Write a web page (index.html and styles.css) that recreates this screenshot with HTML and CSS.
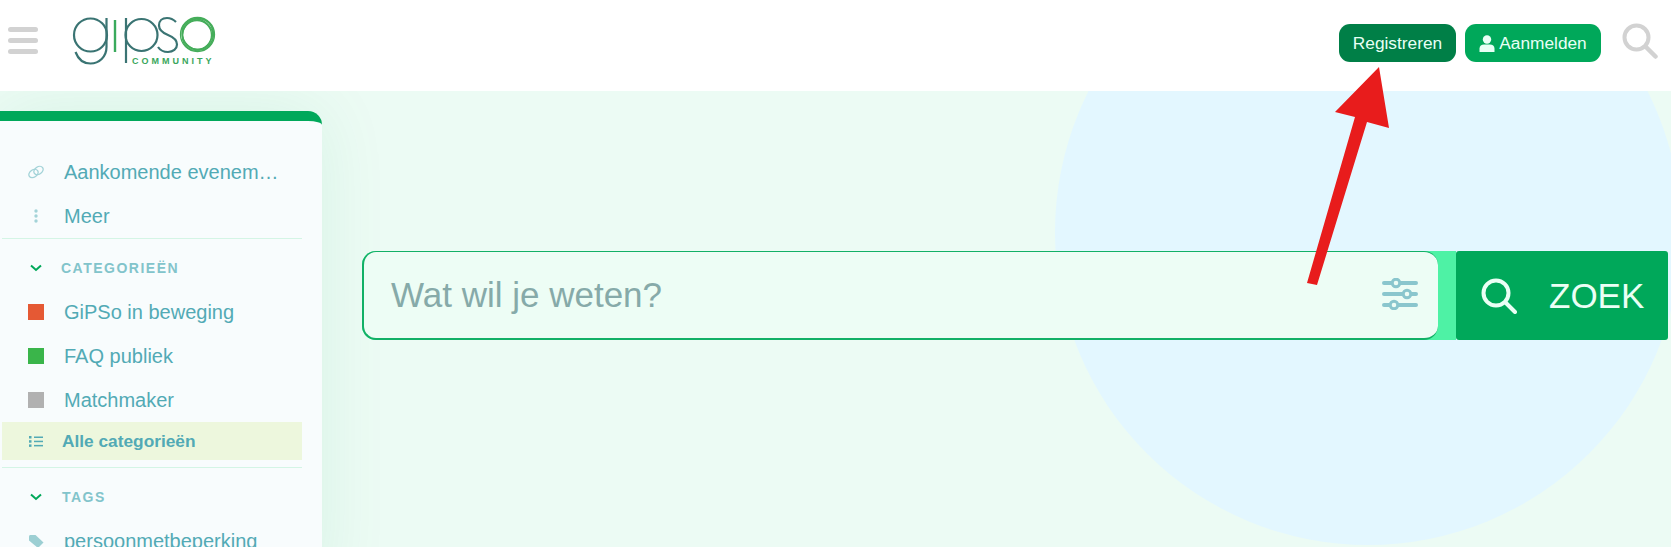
FILE: index.html
```html
<!DOCTYPE html>
<html lang="nl">
<head>
<meta charset="utf-8">
<title>GiPSo Community</title>
<link rel="stylesheet" href="styles.css">
</head>
<body>
<header class="topbar">
  <button class="burger" aria-label="Menu"><span></span><span></span><span></span></button>
  <svg class="logo" width="150" height="70" viewBox="68 5 150 70" aria-label="GiPSo Community">
    <g fill="none" stroke="#3a7473" stroke-width="2.200">
      <circle cx="90.500" cy="35" r="16.500"/>
      <path d="M106.500 18V47C106.500 57 99 63.500 90.500 63.500C84 63.500 78.500 60 75.500 52"/>
      <path d="M126 18V63"/>
      <circle cx="141.500" cy="35" r="16"/>
      <path d="M176 22C173 19 170 18 167 18C162 18 159 21 159 25.500C159 30 163 33 168 35C173 37 177 40 177 44.500C177 49 173 52 168 52C164 52 160 50 158 47"/>
    </g>
    <path d="M115 20V52" stroke="#3aaa5c" stroke-width="2.400" fill="none"/>
    <g fill="none" stroke="#45ad5a" stroke-width="1.300">
      <circle cx="197.500" cy="34.500" r="17"/>
      <circle cx="197" cy="35" r="14.500"/>
      <circle cx="198" cy="34" r="15.500"/>
      <ellipse cx="197.500" cy="34.500" rx="14.500" ry="16.500" transform="rotate(35 197.500 34.500)"/>
      <ellipse cx="197.500" cy="34.500" rx="14.500" ry="16.500" transform="rotate(-45 197.500 34.500)"/>
    </g>
    <text class="logo-sub" x="132" y="63.500">COMMUNITY</text>
  </svg>
  <div class="actions">
    <a class="btn btn-dark">Registreren</a>
    <a class="btn btn-green">
      <svg width="16" height="17" viewBox="0 0 16 17"><circle cx="8" cy="4.500" r="4.200" fill="#e8fff5"/><path d="M0.500 17V13.500C0.500 11 2.500 9.500 5 9.500H11C13.500 9.500 15.500 11 15.500 13.500V17Z" fill="#e8fff5"/></svg>
      Aanmelden
    </a>
    <svg class="head-search" width="36" height="36" viewBox="0 0 36 36" fill="none" stroke="#d2d2d2" stroke-linecap="round"><circle cx="14.500" cy="14.500" r="12" stroke-width="4"/><path d="M24 24L33.500 33.500" stroke-width="4.500"/></svg>
  </div>
</header>

<main class="stage">
  <div class="circle"></div>
  <aside class="sidebar">
    <ul class="nav">
      <li class="row"><span class="ico"><svg width="16" height="14" viewBox="0 0 16 14" fill="none" stroke="#a3d3d8" stroke-width="1.400"><ellipse cx="5.500" cy="8.500" rx="5" ry="3.600" transform="rotate(-35 5.500 8.500)"/><ellipse cx="10.500" cy="5.500" rx="5" ry="3.600" transform="rotate(-35 10.500 5.500)"/></svg></span><span class="label">Aankomende evenem…</span></li>
      <li class="row"><span class="ico"><svg width="4" height="14" viewBox="0 0 4 14" fill="#a3d3d8"><circle cx="2" cy="2" r="1.700"/><circle cx="2" cy="7" r="1.700"/><circle cx="2" cy="12" r="1.700"/></svg></span><span class="label">Meer</span></li>
    </ul>
    <div class="section">
      <div class="sec-head"><span class="ico"><svg width="12" height="8" viewBox="0 0 12 8" fill="none" stroke="#00a85a" stroke-width="2"><path d="M1 1.500L6 6L11 1.500"/></svg></span><span>CATEGORIEËN</span></div>
      <ul class="nav">
        <li class="row"><span class="ico"><i class="sq sq-orange"></i></span><span class="label">GiPSo in beweging</span></li>
        <li class="row"><span class="ico"><i class="sq sq-green"></i></span><span class="label">FAQ publiek</span></li>
        <li class="row"><span class="ico"><i class="sq sq-grey"></i></span><span class="label">Matchmaker</span></li>
        <li class="row row-all"><span class="ico"><svg width="14" height="11" viewBox="0 0 14 11" fill="#52aab5"><rect y="0" width="2.500" height="2.500"/><rect y="4.200" width="2.500" height="2.500"/><rect y="8.400" width="2.500" height="2.500"/><rect x="5" y="0.500" width="9" height="1.500"/><rect x="5" y="4.700" width="9" height="1.500"/><rect x="5" y="8.900" width="9" height="1.500"/></svg></span><span class="label-all">Alle categorieën</span></li>
      </ul>
    </div>
    <div class="section section-tags">
      <div class="sec-head sec-head-tags"><span class="ico"><svg width="12" height="8" viewBox="0 0 12 8" fill="none" stroke="#00a85a" stroke-width="2"><path d="M1 1.500L6 6L11 1.500"/></svg></span><span>TAGS</span></div>
      <ul class="nav">
        <li class="row"><span class="ico"><svg width="15" height="13" viewBox="0 0 15 13" fill="#9ccfd3"><path d="M0 1.500C0 .6.600 0 1.500 0H6.500L14.500 7.500L9 13L0 5.500Z"/></svg></span><span class="label">persoonmetbeperking</span></li>
      </ul>
    </div>
  </aside>

  <section class="search-area">
    <form class="search">
      <div class="search-track">
        <div class="search-box">
          <span class="placeholder">Wat wil je weten?</span>
          <svg class="sliders" width="36" height="32" viewBox="0 0 36 32" fill="none" stroke="#8ac6cd" stroke-width="4" stroke-linecap="round"><path d="M2 5H34M2 16H34M2 27H34"/><circle cx="14" cy="5" r="3.800" fill="#edfdf5" stroke-width="3"/><circle cx="25" cy="16" r="3.800" fill="#edfdf5" stroke-width="3"/><circle cx="12" cy="27" r="3.800" fill="#edfdf5" stroke-width="3"/></svg>
        </div>
      </div>
      <button class="search-btn" type="button">
        <svg width="36" height="36" viewBox="0 0 36 36" fill="none" stroke="#eafff5" stroke-linecap="round"><circle cx="15" cy="15" r="12.500" stroke-width="4"/><path d="M25 25L34 34" stroke-width="4"/></svg>
        <span>ZOEK</span>
      </button>
    </form>
  </section>
</main>
<svg class="arrow" width="100" height="230" viewBox="0 0 100 230"><path d="M79 7L89 68L67 62L17 225L7 223L55 57L35 52Z" fill="#e81c1c"/></svg>
</body>
</html>
```
FILE: styles.css
```css
* { box-sizing: border-box; }
html, body { margin: 0; height: 100%; }
body {
  position: relative;
  font-family: "Liberation Sans", Arial, sans-serif;
  overflow: hidden;
  background: #ecfbf4;
  display: flex;
  flex-direction: column;
}
ul { list-style: none; margin: 0; padding: 0; }

.topbar {
  height: 91px;
  flex: none;
  background: #fff;
  display: flex;
  align-items: center;
  padding-left: 8px;
}
.burger {
  width: 30px;
  display: flex;
  flex-direction: column;
  gap: 6px;
  padding: 0;
  border: 0;
  background: none;
  margin-bottom: 10px;
}
.burger span { height: 5px; border-radius: 3px; background: #d2d2d2; }
.logo { margin-left: 30px; margin-bottom: 11px; flex: none; display: block; }
.logo-sub {
  font: 700 9px "Liberation Sans", Arial, sans-serif;
  letter-spacing: 3px;
  fill: #3aa65c;
}
.actions {
  margin-left: auto;
  display: flex;
  align-items: center;
  padding-right: 13px;
  margin-bottom: 5px;
}
.btn {
  height: 38px;
  border-radius: 11px;
  display: flex;
  align-items: center;
  gap: 4px;
  font-size: 17.300px;
  color: #e8fff5;
}
.btn-dark { width: 117px; justify-content: center; background: #007f47; margin-right: 9px; }
.btn-green { width: 136px; justify-content: center; background: #00a85a; margin-right: 21px; }
.head-search { display: block; margin-top: -4px; }

.stage {
  flex: 1;
  min-height: 0;
  position: relative;
  display: flex;
  overflow: hidden;
}
.circle {
  position: absolute;
  left: 1055px;
  top: -172px;
  width: 626px;
  height: 626px;
  border-radius: 50%;
  background: #e3f7ff;
}
.sidebar {
  position: relative;
  flex: none;
  width: 322px;
  height: 480px;
  margin-top: 20px;
  padding: 29px 20px 0 2px;
  border-top: 10px solid #00a85a;
  border-top-right-radius: 14px;
  background: #f8fcfd;
  box-shadow: 0 0 70px rgba(0, 168, 90, .09);
}
.row {
  height: 44px;
  display: flex;
  align-items: center;
  padding-left: 24px;
  font-size: 20px;
  color: #52aab5;
}
.ico {
  flex: none;
  width: 20px;
  display: flex;
  justify-content: center;
  align-items: center;
  margin-right: 18px;
}
.label { white-space: nowrap; }
.section { border-top: 1px solid #d4f5e5; }
.section-tags { margin-top: 7px; }
.sec-head {
  height: 51px;
  display: flex;
  align-items: center;
  padding: 7px 0 0 24px;
  font-size: 14px;
  font-weight: 700;
  letter-spacing: 1.500px;
  color: #82c4cb;
}
.sec-head .ico { margin-right: 15px; }
.sec-head-tags .ico { margin-right: 16px; }
.sq { display: block; width: 16px; height: 16px; }
.sq-orange { background: #e55934; }
.sq-green { background: #3ab54a; }
.sq-grey { background: #b1b1b1; }
.row-all { height: 38px; background: #edf7dd; }
.row-all .ico { margin-right: 16px; }
.label-all { font-size: 17.300px; font-weight: 700; color: #52aab5; }

.search-area {
  position: relative;
  flex: 1;
  display: flex;
  align-items: flex-start;
  padding: 160px 3px 0 40px;
}
.search { flex: 1; display: flex; }
.search-track {
  flex: 1;
  height: 89px;
  padding-right: 18px;
  background: #4ef2a5;
  border-radius: 14px 0 0 14px;
}
.search-box {
  height: 100%;
  display: flex;
  align-items: center;
  justify-content: space-between;
  padding: 0 20px 0 27px;
  background: #edfdf5;
  border: 0 solid #12b066;
  border-width: 1.500px 0 2.500px 2px;
  border-radius: 14px;
}
.placeholder { font-size: 35px; color: #86aaa9; }
.sliders { display: block; margin-top: -2px; }
.search-btn {
  flex: none;
  width: 212px;
  height: 89px;
  display: flex;
  align-items: center;
  gap: 32px;
  padding: 0 0 0 25px;
  border: 0;
  border-radius: 3px;
  background: #00a85a;
  color: #eafff5;
  font: 35px "Liberation Sans", Arial, sans-serif;
}
.search-btn svg { flex: none; }
.arrow {
  position: absolute;
  left: 1300px;
  top: 60px;
}
```
